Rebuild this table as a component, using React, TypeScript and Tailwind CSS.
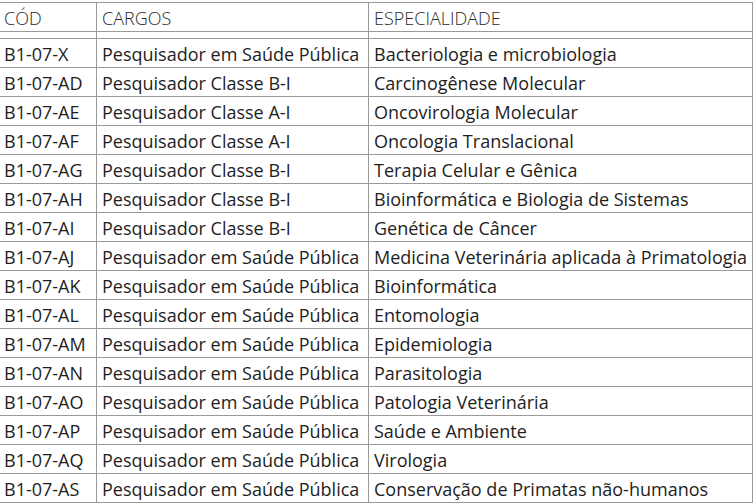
const rows = [
  ["B1-07-X", "Pesquisador em Saúde Pública", "Bacteriologia e microbiologia"],
  ["B1-07-AD", "Pesquisador Classe B-I", "Carcinogênese Molecular"],
  ["B1-07-AE", "Pesquisador Classe A-I", "Oncovirologia Molecular"],
  ["B1-07-AF", "Pesquisador Classe A-I", "Oncologia Translacional"],
  ["B1-07-AG", "Pesquisador Classe B-I", "Terapia Celular e Gênica"],
  ["B1-07-AH", "Pesquisador Classe B-I", "Bioinformática e Biologia de Sistemas"],
  ["B1-07-AI", "Pesquisador Classe B-I", "Genética de Câncer"],
  ["B1-07-AJ", "Pesquisador em Saúde Pública", "Medicina Veterinária aplicada à Primatologia"],
  ["B1-07-AK", "Pesquisador em Saúde Pública", "Bioinformática"],
  ["B1-07-AL", "Pesquisador em Saúde Pública", "Entomologia"],
  ["B1-07-AM", "Pesquisador em Saúde Pública", "Epidemiologia"],
  ["B1-07-AN", "Pesquisador em Saúde Pública", "Parasitologia"],
  ["B1-07-AO", "Pesquisador em Saúde Pública", "Patologia Veterinária"],
  ["B1-07-AP", "Pesquisador em Saúde Pública", "Saúde e Ambiente"],
  ["B1-07-AQ", "Pesquisador em Saúde Pública", "Virologia"],
  ["B1-07-AS", "Pesquisador em Saúde Pública", "Conservação de Primatas não-humanos"],
];

export default function App() {
  const cell = "border border-[#9a9a9a] px-[5px] pt-[2px] pb-0 text-left align-middle whitespace-nowrap overflow-hidden";
  return (
    <div className="bg-white w-[754px] h-[503px] overflow-hidden pt-[2px]">
      <table
        className="-ml-[2px] border-collapse text-[#1e1e1e] text-[18px] leading-[26px] table-fixed w-[754px]"
        style={{ fontFamily: '"Open Sans", "Noto Sans", sans-serif' }}
      >
        <colgroup>
          <col className="w-[98px]" />
          <col className="w-[272px]" />
          <col className="w-[384px]" />
        </colgroup>
        <thead>
          <tr className="h-[29px] text-[#2a2a2a]">
            <th className={`${cell} font-light`}>CÓD</th>
            <th className={`${cell} font-light`}>CARGOS</th>
            <th className={`${cell} font-light`}>ESPECIALIDADE</th>
          </tr>
          <tr className="h-[7px]">
            <td className="border border-[#9a9a9a] p-0 leading-none"></td>
            <td className="border border-[#9a9a9a] p-0 leading-none"></td>
            <td className="border border-[#9a9a9a] p-0 leading-none"></td>
          </tr>
        </thead>
        <tbody>
          {rows.map((r) => (
            <tr key={r[0]} className="h-[29px]">
              <td className={cell}>{r[0]}</td>
              <td className={cell}>{r[1]}</td>
              <td className={cell}>{r[2]}</td>
            </tr>
          ))}
        </tbody>
      </table>
    </div>
  );
}
